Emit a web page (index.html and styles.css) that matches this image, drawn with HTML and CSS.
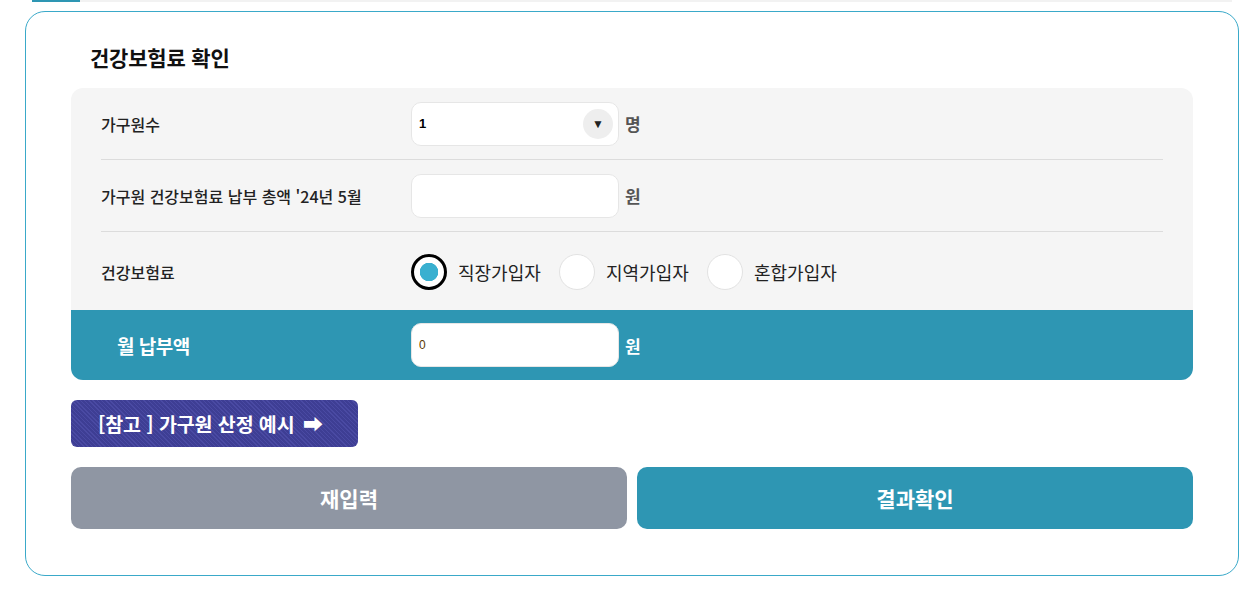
FILE: index.html
```html
<!DOCTYPE html>
<html lang="ko">
<head>
    <meta charset="UTF-8">
    <title>건강보험료 확인</title>
    <link rel="stylesheet" href="styles.css">
</head>
<body>
    <div class="tabline"><span class="tab-on"></span></div>

    <div class="card">
        <h2 class="title">건강보험료 확인</h2>

        <div class="form-box">
            <div class="row">
                <label class="label">가구원수</label>
                <div class="field">
                    <div class="select">
                        <span>1</span>
                        <span class="arrow">&#9660;</span>
                    </div>
                    <span class="unit">명</span>
                </div>
            </div>
            <div class="row">
                <label class="label">가구원 건강보험료 납부 총액 '24년 5월</label>
                <div class="field">
                    <input type="text" class="input">
                    <span class="unit">원</span>
                </div>
            </div>
            <div class="row row-radio">
                <label class="label">건강보험료</label>
                <div class="field radios">
                    <label class="radio"><span class="dot checked"></span>직장가입자</label>
                    <label class="radio"><span class="dot"></span>지역가입자</label>
                    <label class="radio"><span class="dot"></span>혼합가입자</label>
                </div>
            </div>
            <div class="row row-total">
                <label class="label">월 납부액</label>
                <div class="field">
                    <input type="text" class="input input-total" value="0">
                    <span class="unit">원</span>
                </div>
            </div>
        </div>

        <button type="button" class="btn-ref">[참고 ] 가구원 산정 예시 <span class="arr">&#10145;</span></button>

        <div class="actions">
            <button type="button" class="btn btn-reset">재입력</button>
            <button type="button" class="btn btn-submit">결과확인</button>
        </div>
    </div>
</body>
</html>
```

FILE: styles.css
```css
* {
    box-sizing: border-box;
}

body {
    margin: 0;
    font-family: "Noto Sans CJK KR", "Noto Sans", sans-serif;
    color: #222;
    background: #fff;
}

.tabline {
    margin-left: 32px;
    width: 1200px;
    height: 2px;
    background: #f2f2f2;
}

.tab-on {
    display: block;
    width: 48px;
    height: 2px;
    background: #2e96b3;
}

.card {
    margin: 9px 0 0 25px;
    width: 1214px;
    border: 1px solid #3aa9c9;
    border-radius: 20px;
    padding: 31px 45px 46px 45px;
}

.title {
    margin: 0 0 17px 19px;
    font-size: 21px;
    line-height: 28px;
    font-weight: 700;
    color: #111;
    letter-spacing: -0.2px;
}

.form-box {
    background: #f5f5f5;
    border-radius: 12px;
    overflow: hidden;
}

.row {
    display: flex;
    align-items: center;
    margin: 0 30px;
    height: 72px;
    border-bottom: 1px solid #dcdcdc;
}

.row-radio {
    height: 78px;
    border-bottom: none;
    padding-top: 2px;
}

.row-total {
    margin: 0;
    padding-left: 46px;
    height: 70px;
    border-bottom: none;
    background: #2e96b3;
}

.label {
    width: 310px;
    font-size: 16px;
    letter-spacing: 0;
    font-weight: 500;
}

.row-total .label {
    width: 294px;
    color: #fff;
    font-size: 19px;
    font-weight: 700;
    letter-spacing: -0.5px;
}

.field {
    display: flex;
    align-items: center;
}

.select,
.input {
    width: 208px;
    height: 44px;
    background: #fff;
    border: 1px solid #e6e6e6;
    border-radius: 10px;
}

.select {
    display: flex;
    align-items: center;
    justify-content: space-between;
    padding: 0 5px 0 7px;
    font-family: "Liberation Sans", sans-serif;
    font-size: 13px;
    font-weight: 700;
    color: #000;
}

.arrow {
    width: 30px;
    height: 30px;
    border-radius: 50%;
    background: #eee;
    display: flex;
    align-items: center;
    justify-content: center;
    font-size: 12px;
    color: #222;
}

.input {
    padding: 0 7px;
    font-family: "Liberation Sans", sans-serif;
    font-size: 12px;
    outline: none;
}

.input-total {
    color: #5a3a00;
}

.unit {
    margin-left: 6px;
    font-size: 17px;
    font-weight: 700;
    color: #555;
}

.row-total .unit {
    color: #fff;
}

.radio {
    display: flex;
    align-items: center;
    width: 148px;
    font-size: 18px;
    letter-spacing: 0;
    color: #222;
}

.radio:last-child {
    width: auto;
}

.dot {
    width: 36px;
    height: 36px;
    margin-right: 11px;
    border-radius: 50%;
    background: #fff;
    border: 1px solid #e2e2e2;
}

.dot.checked {
    border: 3px solid #000;
    background: radial-gradient(circle, #3ab0d0 0 9px, #fff 9.5px);
}

.btn-ref {
    display: block;
    margin-top: 20px;
    width: 287px;
    height: 47px;
    padding: 0 0 0 27px;
    text-align: left;
    border: none;
    border-radius: 6px;
    background: repeating-linear-gradient(45deg, #4a4aa3 0 1px, #3e3e94 1px 3px);
    color: #fff;
    font-family: "Noto Sans CJK KR", sans-serif;
    font-size: 19.5px;
    font-weight: 700;
    letter-spacing: -0.1px;
    cursor: pointer;
}

.arr {
    font-size: 20px;
    margin-left: 3px;
}

.actions {
    display: flex;
    gap: 10px;
    margin-top: 20px;
}

.btn {
    flex: 1;
    height: 62px;
    border: none;
    border-radius: 10px;
    color: #fff;
    font-family: "Noto Sans CJK KR", sans-serif;
    font-size: 21px;
    font-weight: 700;
    cursor: pointer;
}

.btn-reset {
    background: #8f96a3;
}

.btn-submit {
    background: #2e96b3;
}
```
